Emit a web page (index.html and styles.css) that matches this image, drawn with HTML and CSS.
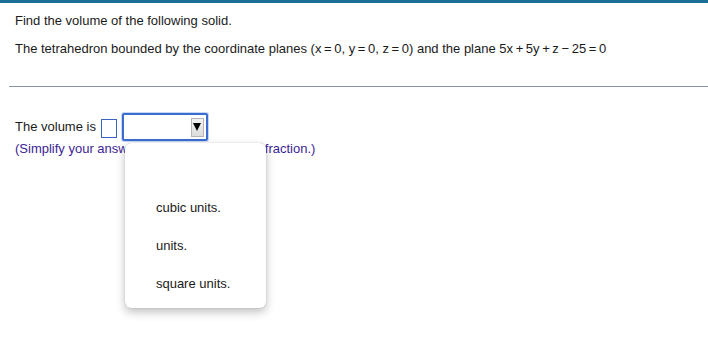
FILE: index.html
```html
<!DOCTYPE html>
<html lang="en">
<head>
<meta charset="utf-8">
<title>Volume question</title>
<link rel="stylesheet" href="styles.css">
</head>
<body>
<div class="topbar"></div>
<main class="content">
  <p class="q">Find the volume of the following solid.</p>
  <p class="q q2">The tetrahedron bounded by the coordinate planes (x&thinsp;=&thinsp;0, y&thinsp;=&thinsp;0, z&thinsp;=&thinsp;0) and the plane 5x&thinsp;+&thinsp;5y&thinsp;+&thinsp;z&thinsp;−&thinsp;25&thinsp;=&thinsp;0</p>
  <div class="rule"></div>
  <div class="answer-row">
    <span class="label">The volume is</span>
    <span class="input-box"></span>
    <div class="select-wrap">
      <div class="select">
        <span class="select-btn"><span class="tri"></span></span>
      </div>
      <div class="menu">
        <div class="opt"></div>
        <div class="opt">cubic units.</div>
        <div class="opt">units.</div>
        <div class="opt">square units.</div>
      </div>
    </div>
  </div>
  <p class="note">(Simplify your answer. Type an integer or a fraction.)</p>
</main>
</body>
</html>
```
FILE: styles.css
```css
html, body {
  margin: 0;
  padding: 0;
  background: #ffffff;
}
html {
  height: 100%;
}
body {
  min-height: 100vh;
  font-family: "Liberation Sans", Arial, sans-serif;
  font-size: 13px;
  line-height: 16px;
  color: #1a1a1a;
}
.topbar {
  height: 3px;
  background: #1b6f97;
}
.content {
  padding: 10px 0 0 15px;
}
.q {
  margin: 0;
}
.q2 {
  margin-top: 12px;
}
.rule {
  height: 1px;
  background: #8b93a6;
  margin: 29px 0 26px -6px;
}
.answer-row {
  display: flex;
  align-items: center;
  height: 28px;
}
.label {
  margin-right: 5px;
}
.input-box {
  width: 14px;
  height: 17px;
  border: 1px solid #3a64c0;
  margin-right: 4px;
  margin-top: 2px;
}
.select-wrap {
  position: relative;
  z-index: 5;
}
.select {
  width: 80px;
  height: 24px;
  border: 2px solid #3b6ccf;
  box-shadow: 0 0 0 1px #c7d6f2;
  border-radius: 2px;
  display: flex;
  align-items: center;
  justify-content: flex-end;
  padding-right: 2px;
  margin-left: 1px;
}
.select-btn {
  width: 13px;
  height: 19px;
  background: linear-gradient(#f2f2f2, #dcdcdc);
  border: 1px solid #b5b5b5;
  box-sizing: border-box;
  display: flex;
  align-items: center;
  justify-content: center;
}
.tri {
  width: 0;
  height: 0;
  border-left: 4px solid transparent;
  border-right: 4px solid transparent;
  border-top: 8px solid #000;
}
.menu {
  position: absolute;
  left: 4px;
  top: 30px;
  width: 141px;
  height: 165px;
  padding: 8px 0 4px;
  background: #ffffff;
  border-radius: 6px;
  box-shadow: 0 0 1px rgba(0,0,0,0.35), 0 4px 10px rgba(0,0,0,0.25);
  box-sizing: border-box;
}
.opt {
  display: block;
  height: 38px;
  line-height: 38px;
  padding-left: 31px;
  color: #1a1a1a;
  white-space: nowrap;
}
.note {
  margin: 0;
  color: #3c2596;
}
```
